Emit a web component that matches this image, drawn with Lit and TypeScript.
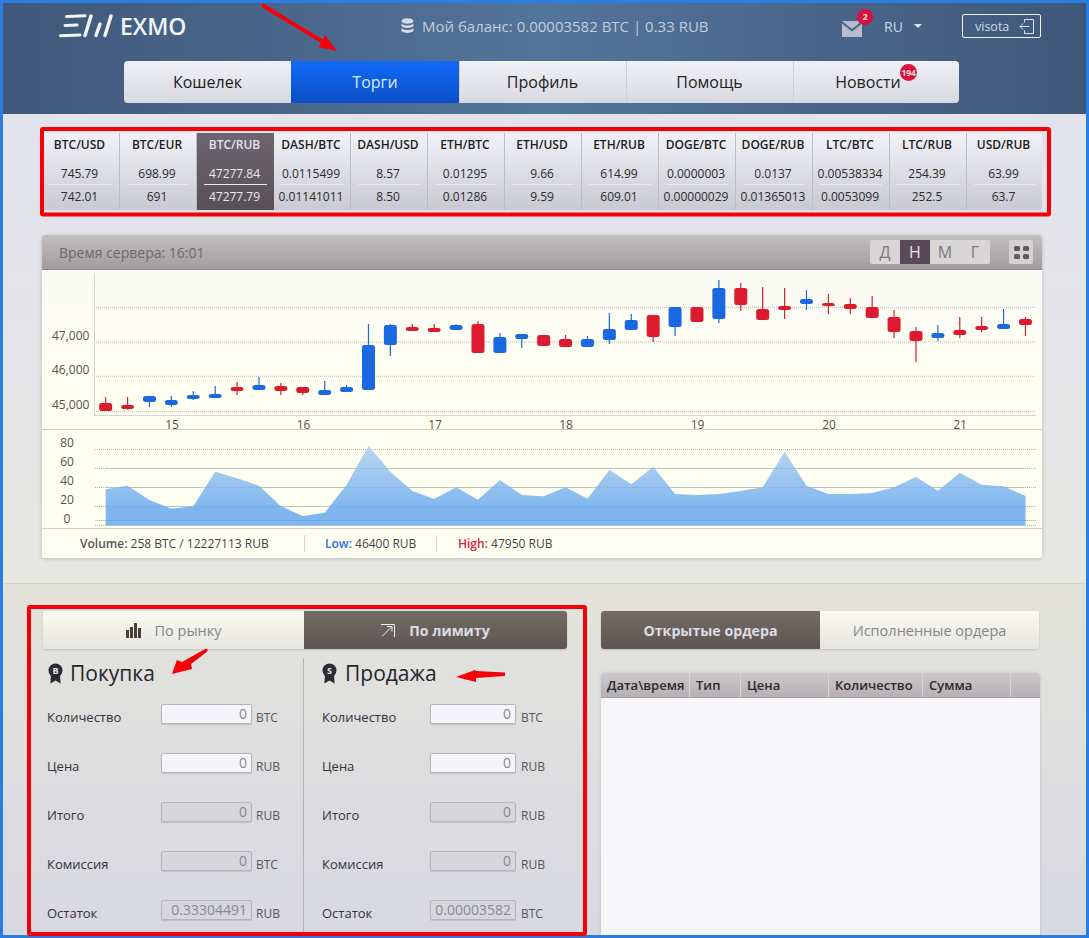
import { LitElement, html, css, svg } from "lit";
import { customElement } from "lit/decorators.js";

const tickers: [string, string, string][] = [
  ["BTC/USD", "745.79", "742.01"], ["BTC/EUR", "698.99", "691"], ["BTC/RUB", "47277.84", "47277.79"],
  ["DASH/BTC", "0.0115499", "0.01141011"], ["DASH/USD", "8.57", "8.50"], ["ETH/BTC", "0.01295", "0.01286"],
  ["ETH/USD", "9.66", "9.59"], ["ETH/RUB", "614.99", "609.01"], ["DOGE/BTC", "0.0000003", "0.00000029"],
  ["DOGE/RUB", "0.0137", "0.01365013"], ["LTC/BTC", "0.00538334", "0.0053099"], ["LTC/RUB", "254.39", "252.5"],
  ["USD/RUB", "63.99", "63.7"],
];

// wickTop, wickBottom, bodyTop, bodyBottom (in 1/3 px from y=270), r = red / b = blue
const candles: [number, number, number, number, string][] = [
  [381,423,399,423,"r"],[381,419,405,417,"r"],[378,411,378,396,"b"],[378,411,390,405,"b"],[363,390,375,387,"b"],
  [348,384,372,384,"b"],[336,375,351,363,"r"],[321,360,345,360,"b"],[339,375,348,363,"r"],[351,375,351,369,"r"],
  [333,375,360,375,"b"],[345,366,351,366,"b"],[162,360,225,360,"b"],[162,258,165,225,"b"],[162,183,171,183,"r"],
  [162,186,174,186,"r"],[162,180,165,180,"b"],[153,249,162,249,"r"],[189,249,201,249,"b"],[192,234,192,207,"b"],
  [195,228,195,228,"r"],[195,231,207,231,"r"],[198,231,207,231,"b"],[129,222,177,210,"b"],[132,180,150,180,"b"],
  [135,216,135,201,"r"],[111,198,111,171,"b"],[111,156,111,156,"r"],[30,159,54,147,"b"],[39,123,54,105,"r"],
  [51,150,117,150,"r"],[54,147,108,120,"r"],[60,120,87,102,"b"],[72,132,99,108,"r"],[84,132,102,117,"r"],
  [78,144,111,144,"r"],[120,204,141,186,"r"],[171,276,183,213,"r"],[165,213,189,204,"b"],[141,204,180,195,"r"],
  [141,186,168,180,"r"],[117,177,162,177,"b"],[141,198,147,165,"r"],
];
const cx = (i: number) => 105.67 + 21.9 * i;

// volume values in 1/3 px from y=430
const volume = [178,167,210,236,229,125,145,167,229,258,248,165,47,125,183,207,172,209,150,195,199,
  172,206,120,163,110,192,195,192,183,172,65,167,192,192,189,172,141,182,128,164,169,198];

const forms = {
  buy: [["Количество","0","BTC",false],["Цена","0","RUB",false],["Итого","0","RUB",true],["Комиссия","0","BTC",true],["Остаток","0.33304491","RUB",true]],
  sell: [["Количество","0","BTC",false],["Цена","0","RUB",false],["Итого","0","RUB",true],["Комиссия","0","RUB",true],["Остаток","0.00003582","BTC",true]],
} as const;

const medal = (letter: string) => html`<svg class="medal" width="15" height="21" viewBox="0 0 15 21">
  <path d="M3 12 L2.4 20.5 L7.5 17.6 L12.6 20.5 L12 12 Z" fill="#2b2b30"/>
  <circle cx="7.5" cy="7.5" r="7" fill="#2b2b30"/>
  <text x="7.5" y="10.6" text-anchor="middle" font-family="Open Sans" font-weight="700" font-size="9" fill="#e8e8ec">${letter}</text>
</svg>`;

@customElement("app-root")
export class AppRoot extends LitElement {
  static styles = css`
    :host { display: block; position: relative; width: 1089px; height: 938px; overflow: hidden; font-family: "Open Sans", sans-serif; color: #333; }
    .page { box-sizing: border-box; width: 1089px; height: 938px; border: 3px solid #2a7de2; overflow: hidden; background: #dcdce0; }

    .header { height: 111px; background: linear-gradient(90deg, #3f5879, #53749b 50%, #3f5879); }
    .top { display: flex; align-items: center; height: 24px; padding: 11px 0 0 56px; }
    .logo { display: flex; align-items: center; width: 342px; }
    .logo-text { margin-left: 7px; font-size: 23px; font-weight: 600; color: #f2f4f8; line-height: 24px; }
    .balance { display: flex; align-items: center; gap: 8px; width: 441px; font-size: 15px; color: #c3cedd; white-space: nowrap; }
    .mail { position: relative; width: 20px; height: 16px; margin-top: 3px; }
    .mail-badge { position: absolute; left: 15px; top: -11px; width: 16px; height: 16px; border-radius: 50%; background: #d9113a; color: #f4dfe4; font-size: 9px; font-weight: 700; text-align: center; line-height: 16px; }
    .lang { display: flex; align-items: center; margin-left: 22px; width: 78px; font-size: 14px; color: #ccd6e2; }
    .lang svg { margin-left: 11px; }
    .user { box-sizing: border-box; display: flex; align-items: center; gap: 10px; width: 79px; height: 24px; padding-left: 12px; border: 1px solid #f0f2f6; border-radius: 2px; font-size: 12.5px; color: #d0d9e5; }

    .nav { display: grid; grid-template-columns: 167px 168px 167px 167px 166px; width: 835px; height: 42px; margin: 23px 0 0 121px; border-radius: 4px; overflow: hidden; background: linear-gradient(#f0f0f7, #d8d8e0); }
    .nav-item { display: flex; align-items: center; justify-content: center; font-size: 16px; color: #222; box-shadow: inset 1px 0 0 #cfcfd8; }
    .nav-item:first-child { box-shadow: none; }
    .nav-item.active { background: linear-gradient(#1269f8, #0b4fc6); color: #d9ecfb; box-shadow: none; }
    .badged { position: relative; margin-right: 16px; }
    .nav-badge { position: absolute; left: 65px; top: -7px; width: 17px; height: 17px; border-radius: 50%; background: #d9113a; color: #f6dfe4; font-size: 8.5px; font-weight: 700; line-height: 17px; text-align: center; }

    .market { padding: 19px 0 25px 39px; background: linear-gradient(#e2e3ec, #e6e6e2); border-bottom: 1px solid #d6d6d0; }
    .ticker { display: grid; grid-template-columns: 78px repeat(11, 77px) 75px; width: 1000px; height: 77px; overflow: hidden; border-radius: 3px; background: linear-gradient(#f1f1f8, #c9c9d1); }
    .cell { box-sizing: border-box; padding: 2px 7px 0; text-align: center; font-size: 12px; color: #2b2b2b; border-right: 1px solid #bcbcc6; white-space: nowrap; }
    .cell:last-child { border-right: 0; }
    .pair { font-weight: 600; color: #1d1d20; line-height: 20px; height: 28px; margin: 0 -6px 0 -8px; }
    .ask { height: 21px; line-height: 22px; border-bottom: 1px solid #e9e9ee; }
    .bid { height: 22px; line-height: 24px; }
    .ask span, .bid span { display: block; margin: 0 -7px 0 -9px; }
    .cell.active { background: linear-gradient(#6d666f, #575056); color: #e8e8ec; border-right: 0; }
    .cell.active .pair { color: #e4e4ea; }

    .chart { width: 1000px; background: linear-gradient(#f9f9f7, #fffff1 45%); box-shadow: 0 1px 4px rgba(0,0,0,.2); margin-top: 25px; border-radius: 3px; }
    .chart-head { box-sizing: border-box; display: flex; align-items: center; height: 35px; padding: 0 9px 0 17px; background: linear-gradient(#c2bfc0, #a29d9e); border-bottom: 1px solid #8e898b; border-radius: 3px 3px 0 0; font-size: 14px; color: #6d696c; }
    .server { flex: 1; }
    .periods { display: grid; grid-template-columns: repeat(4, 30px); height: 24px; border-radius: 2px; overflow: hidden; background: #d8d6d6; margin-right: 19px; }
    .period { display: flex; align-items: center; justify-content: center; font-size: 16px; color: #7b787b; }
    .period.active { background: #5a4a57; color: #e4e2e6; }
    .grid-btn { display: grid; place-items: center; width: 24px; height: 24px; background: #d3d1d1; border-radius: 2px; }
    .plot { display: block; }
    .plot text { font-family: "Open Sans", sans-serif; font-size: 12px; fill: #55504a; }
    .chart-foot { display: flex; align-items: center; height: 30px; border-top: 1px solid #d0d0c4; box-sizing: border-box; font-size: 12px; color: #444; background: #fffff2; border-radius: 0 0 3px 3px; }
    .stat { box-sizing: border-box; display: flex; align-items: center; height: 17px; white-space: pre; }
    .stat b { font-weight: 600; }
    .stat.vol { width: 263px; padding-left: 38px; border-right: 1px solid #d4d4cc; }
    .stat.low { width: 132px; padding-left: 20px; border-right: 1px solid #d4d4cc; }
    .stat.high { padding-left: 21px; }
    .vol b { color: #555; }
    .low b { color: #2a6fe6; }
    .high b { color: #e0203f; }

    .trade { display: flex; gap: 34px; height: 352px; padding: 27px 0 0 40px; box-sizing: border-box; background: linear-gradient(#e3e3db, #d8d8e2); overflow: hidden; }
    .left { width: 524px; }
    .right { width: 439px; }
    .tabs { display: grid; height: 38px; border-radius: 3px; overflow: hidden; box-shadow: 0 1px 2px rgba(0,0,0,.15); background: linear-gradient(#fbfaf5, #e5e4df); font-size: 14.5px; color: #85858d; }
    .tabs.l { grid-template-columns: 261px 263px; }
    .tabs.r { grid-template-columns: 219px 219px; width: 438px; }
    .tab { display: flex; align-items: center; justify-content: center; gap: 14px; }
    .tab.active { background: linear-gradient(#726b67, #5e5553); color: #dcdde2; font-weight: 700; font-size: 14.2px; }

    .forms { display: grid; grid-template-columns: 260px 264px; margin-top: 9px; }
    .col { height: 280px; box-sizing: border-box; }
    .col.sell { border-left: 1px solid #b4b4b8; padding-left: 18px; }
    .col.buy { padding-left: 4px; }
    .title { display: flex; align-items: center; gap: 7px; height: 30px; margin-bottom: 4px; font-size: 21px; color: #25252c; }
    .col.sell .title { gap: 8px; }
    .medal { margin-left: 1px; }
    .col.sell .medal { margin-left: 0; }
    .row { display: flex; align-items: center; height: 49px; font-size: 13px; color: #33333a; }
    .label { width: 114px; padding-top: 1px; }
    .col.sell .label { width: 108px; }
    .field { box-sizing: border-box; width: 91px; height: 20px; margin-top: -6px; padding: 0 4px; border: 1px solid #b4b4ba; border-radius: 2px; background: #f4f4fa; font: 14px "Open Sans", sans-serif; color: #8a8a90; text-align: right; box-shadow: 0 1px 1px rgba(0,0,0,.12); outline: none; }
    .col.sell .field { width: 86px; }
    .field.off { background: #d6d6dd; }
    .unit { margin-left: 4px; font-size: 12px; color: #55555c; padding-top: 1px; }
    .col.sell .unit { margin-left: 5px; }

    .table { width: 439px; height: 262px; margin-top: 24px; background: #f7f7fa; border-radius: 3px 3px 0 0; box-shadow: 0 0 3px rgba(0,0,0,.15); }
    .thead { display: grid; grid-template-columns: 89px 51px 88px 94px 88px 29px; height: 25px; background: linear-gradient(#cbc7ca, #b5b0b3); border-radius: 3px 3px 0 0; border-bottom: 1px solid #a5a0a3; box-sizing: border-box; }
    .th { display: flex; align-items: center; padding-left: 6px; font-size: 13px; font-weight: 600; color: #2c2a2c; border-right: 1px solid #d8d5d7; white-space: nowrap; }
    .th:last-child { border-right: 0; }

    .marks { position: absolute; left: 0; top: 0; pointer-events: none; }
  `;

  private renderPlot() {
    const gridY = [307.3, 342, 376.3, 411.3];
    const pts = volume.map((v, i) => `${cx(i).toFixed(1)},${(430 + v / 3).toFixed(1)}`).join(" ");
    const area = `${cx(0).toFixed(1)},525.5 ${pts} ${cx(42).toFixed(1)},525.5`;
    return html`<svg class="plot" width="1000" height="258" viewBox="42 270 1000 258">
      <defs><linearGradient id="vol" x1="0" x2="0" y1="445" y2="508" gradientUnits="userSpaceOnUse">
        <stop offset="0" stop-color="#bad8f0"/><stop offset="1" stop-color="#80b6f0"/>
      </linearGradient></defs>
      ${gridY.map((y) => svg`<line x1="96" x2="1036" y1=${y} y2=${y} stroke="#bdbdb2" stroke-dasharray="1 1"/>`)}
      <line x1="94.5" x2="94.5" y1="273" y2="416" stroke="#d4d4cc"/>
      <line x1="95" x2="1036" y1="415.5" y2="415.5" stroke="#d4d4cc"/>
      ${[["47,000", 340], ["46,000", 374], ["45,000", 409]].map(([t, y]) => svg`<text x="52" y=${y}>${t}</text>`)}
      ${[["15", 172], ["16", 303.5], ["17", 435], ["18", 566], ["19", 697.5], ["20", 829], ["21", 960]].map(([t, x]) => svg`<text x=${x} y="429" text-anchor="middle">${t}</text>`)}
      <line x1="42" x2="1042" y1="429.5" y2="429.5" stroke="#cfcfc2"/>
      ${candles.map(([wt, wb, bt, bb, c], i) => {
        const col = c === "r" ? "#dc1c2e" : "#1a68e2";
        const x = cx(i);
        return svg`<line x1=${x} x2=${x} y1=${270 + wt / 3} y2=${270 + wb / 3} stroke=${col} stroke-width="1.2"/>
          <rect x=${x - 6.5} y=${270 + bt / 3} width="13" height=${(bb - bt) / 3} rx="2.5" fill=${col}/>`;
      })}
      ${[449.5, 468.5, 487.5, 506.5, 525.5].map((y) => svg`<line x1="95" x2="1036" y1=${y} y2=${y} stroke="#b5b5aa" stroke-dasharray="1 1"/>`)}
      <line x1="95" x2="1036" y1="520.5" y2="520.5" stroke="#d0d0c8"/>
      ${[["80", 447], ["60", 466], ["40", 485], ["20", 504], ["0", 523]].map(([t, y]) => svg`<text x="67" y=${y} text-anchor="middle">${t}</text>`)}
      <polygon points=${area} fill="url(#vol)"/>
      ${[506.5, 487.5, 468.5].map((y) => svg`<line x1="106" x2="1026" y1=${y} y2=${y} stroke="#6f8fb4" stroke-opacity=".4" stroke-dasharray="1 1"/>`)}
      <line x1="106" x2="1026" y1="520.5" y2="520.5" stroke="#6a9fe0" stroke-opacity=".7"/>
    </svg>`;
  }

  private renderForm(kind: "buy" | "sell", title: string, letter: string) {
    return html`<div class="col ${kind}">
      <div class="title">${medal(letter)}<span>${title}</span></div>
      ${forms[kind].map(([label, value, unit, off]) => html`<div class="row">
        <span class="label">${label}</span>
        <input class="field ${off ? "off" : ""}" .value=${value} readonly />
        <span class="unit">${unit}</span>
      </div>`)}
    </div>`;
  }

  render() {
    return html`<div class="page">
      <header class="header">
        <div class="top">
          <div class="logo">
            <svg width="54" height="24" viewBox="59 13 54 24" fill="none" stroke="#f2f4f8" stroke-linecap="round">
              <path d="M66.5 15.5 L85 14.8" stroke-width="3"/>
              <path d="M65 24.5 L77 24" stroke-width="3"/>
              <path d="M60.5 34.8 L80 34" stroke-width="3"/>
              <path d="M91 15 L85 34.5" stroke-width="3.4"/>
              <path d="M100 23 L96 34.5" stroke-width="3.4"/>
              <path d="M111 15 L105 34.5" stroke-width="3.4"/>
            </svg>
            <span class="logo-text">EXMO</span>
          </div>
          <div class="balance">
            <svg width="13" height="16" viewBox="0 0 13 16" fill="#d4dce6">
              <ellipse cx="6.5" cy="3" rx="6" ry="2.8"/>
              <path d="M.5 5.5 C2 8 11 8 12.5 5.5 V8 C11 10.6 2 10.6 .5 8 Z"/>
              <path d="M.5 10 C2 12.5 11 12.5 12.5 10 V12.8 C11 15.6 2 15.6 .5 12.8 Z"/>
            </svg>
            <span>Мой баланс: 0.00003582 BTC | 0.33 RUB</span>
          </div>
          <div class="mail">
            <svg width="20" height="16" viewBox="0 0 20 16">
              <path d="M0 0 H20 L10 8 Z" fill="#b9bccf"/>
              <path d="M0 2.5 L10 10.5 L20 2.5 V16 H0 Z" fill="#b9bccf"/>
            </svg>
            <span class="mail-badge">2</span>
          </div>
          <div class="lang">RU
            <svg width="8" height="4" viewBox="0 0 8 4"><path d="M0 0 H8 L4 4 Z" fill="#dfe5ec"/></svg>
          </div>
          <div class="user">visota
            <svg width="15" height="15" viewBox="0 0 15 15" fill="none" stroke="#dbe2ea" stroke-width="1">
              <path d="M5.5 3.5 V.5 H14.5 V14.5 H5.5 V11.5"/><path d="M10.5 7.5 H1 M4 4.5 L1 7.5 L4 10.5"/>
            </svg>
          </div>
        </div>
        <nav class="nav">
          <div class="nav-item">Кошелек</div>
          <div class="nav-item active">Торги</div>
          <div class="nav-item">Профиль</div>
          <div class="nav-item">Помощь</div>
          <div class="nav-item"><span class="badged">Новости<span class="nav-badge">194</span></span></div>
        </nav>
      </header>

      <section class="market">
        <div class="ticker">
          ${tickers.map(([p, a, b]) => html`<div class="cell ${p === "BTC/RUB" ? "active" : ""}">
            <div class="pair">${p}</div>
            <div class="ask"><span>${a}</span></div>
            <div class="bid"><span>${b}</span></div>
          </div>`)}
        </div>
        <div class="chart">
          <div class="chart-head">
            <span class="server">Время сервера: 16:01</span>
            <div class="periods">
              <span class="period">Д</span><span class="period active">Н</span><span class="period">М</span><span class="period">Г</span>
            </div>
            <div class="grid-btn">
              <svg width="15" height="13" viewBox="0 0 15 13" fill="#5f5a60">
                <rect x="0" y="0" width="6" height="5" rx="1.5"/><rect x="9" y="0" width="6" height="5" rx="1.5"/>
                <rect x="0" y="8" width="6" height="5" rx="1.5"/><rect x="9" y="8" width="6" height="5" rx="1.5"/>
              </svg>
            </div>
          </div>
          ${this.renderPlot()}
          <div class="chart-foot">
            <span class="stat vol"><b>Volume:</b> 258 BTC / 12227113 RUB</span>
            <span class="stat low"><b>Low:</b> 46400 RUB</span>
            <span class="stat high"><b>High:</b> 47950 RUB</span>
          </div>
        </div>
      </section>

      <section class="trade">
        <div class="left">
          <div class="tabs l">
            <div class="tab">
              <svg width="15" height="15" viewBox="0 0 15 15" fill="#4a4038">
                <rect x="0" y="7" width="3" height="8"/><rect x="4" y="4" width="3" height="11"/>
                <rect x="8" y="0" width="3" height="15"/><rect x="12" y="5" width="3" height="10"/>
              </svg>
              <span>По рынку</span>
            </div>
            <div class="tab active">
              <svg width="14" height="13" viewBox="0 0 14 13" fill="none" stroke="#eeeef2" stroke-width="1">
                <path d="M0 .5 H13.5 V13"/><path d="M1 12.5 L11 2.5 M6 2.5 H11 V7.5"/>
              </svg>
              <span>По лимиту</span>
            </div>
          </div>
          <div class="forms">
            ${this.renderForm("buy", "Покупка", "B")}
            ${this.renderForm("sell", "Продажа", "S")}
          </div>
        </div>
        <div class="right">
          <div class="tabs r">
            <div class="tab active">Открытые ордера</div>
            <div class="tab">Исполненные ордера</div>
          </div>
          <div class="table">
            <div class="thead">
              <div class="th">Дата\\время</div><div class="th">Тип</div><div class="th">Цена</div>
              <div class="th">Количество</div><div class="th">Сумма</div><div class="th"></div>
            </div>
          </div>
        </div>
      </section>
    </div>

    <svg class="marks" width="1089" height="938" viewBox="0 0 1089 938" fill="none">
      <rect x="42" y="129" width="1007" height="85.5" rx="1" stroke="#f40008" stroke-width="4"/>
      <rect x="29" y="607" width="556" height="327" rx="1" stroke="#f40008" stroke-width="4"/>
      <g fill="#f40008">
        <polygon points="263,3.3 323,39.5 325,35 337,51 318,47 321,43 261,6.7"/>
        <polygon points="208,650 206,652.5 191,664 192,669 172,674 177,660 182,662 206,648.5"/>
        <polygon points="505,672.5 476,671 475,670 456,677 476,682 476,678 505,676"/>
      </g>
    </svg>`;
  }
}
